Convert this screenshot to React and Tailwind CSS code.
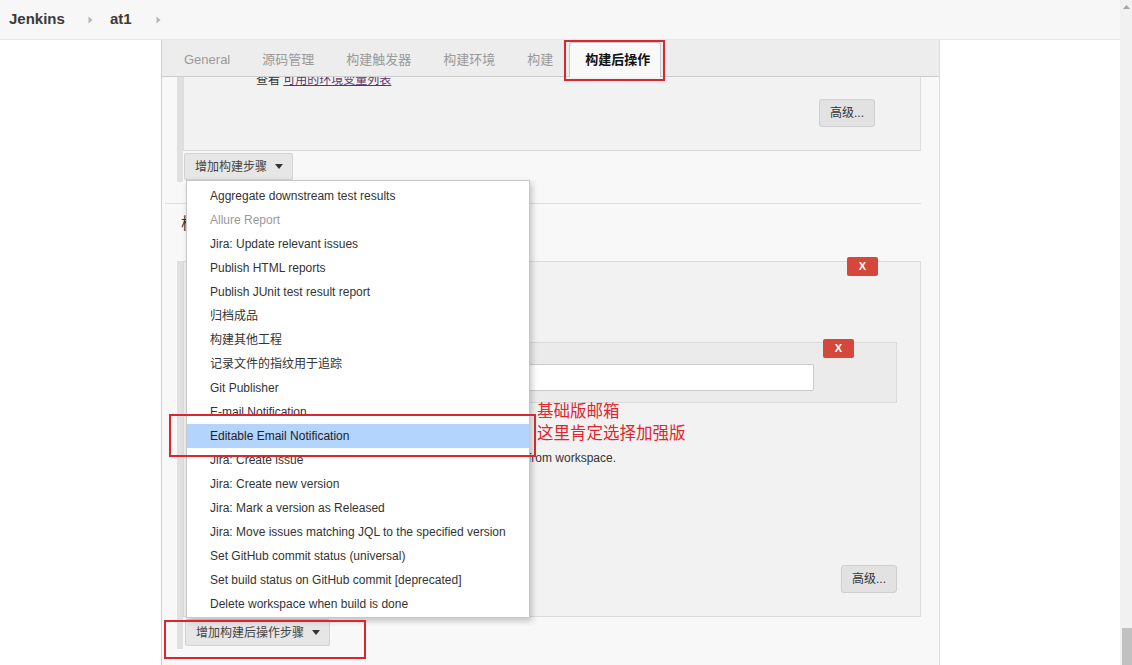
import React from "react";

const menuItems = [
  { t: "Aggregate downstream test results" },
  { t: "Allure Report", dis: true },
  { t: "Jira: Update relevant issues" },
  { t: "Publish HTML reports" },
  { t: "Publish JUnit test result report" },
  { t: "归档成品" },
  { t: "构建其他工程" },
  { t: "记录文件的指纹用于追踪" },
  { t: "Git Publisher" },
  { t: "E-mail Notification" },
  { t: "Editable Email Notification", hi: true },
  { t: "Jira: Create issue" },
  { t: "Jira: Create new version" },
  { t: "Jira: Mark a version as Released" },
  { t: "Jira: Move issues matching JQL to the specified version" },
  { t: "Set GitHub commit status (universal)" },
  { t: "Set build status on GitHub commit [deprecated]" },
  { t: "Delete workspace when build is done" },
];

const tabs = ["General", "源码管理", "构建触发器", "构建环境", "构建"];

function Crumb() {
  return (
    <svg width="5" height="8" viewBox="0 0 5 8" className="block">
      <path d="M0.5 0.5 L4.5 4 L0.5 7.5 Z" fill="#b5b5b5" />
    </svg>
  );
}

function Caret() {
  return (
    <svg width="8" height="5" viewBox="0 0 8 5" className="block">
      <path d="M0 0 L8 0 L4 5 Z" fill="#333" />
    </svg>
  );
}

function AdvBtn() {
  return (
    <div className="h-[28px] px-[10px] flex items-center rounded-[3px] border border-[#cfcfcf] bg-[#e2e2e2] text-[12px] text-[#333]">
      高级...
    </div>
  );
}

function XBtn() {
  return (
    <div className="w-[31px] h-[19px] flex items-center justify-center rounded-[2px] bg-[#d4473a] text-white text-[11px] font-bold leading-none">
      X
    </div>
  );
}

function AddBtn({ label }) {
  return (
    <div className="h-[27px] pl-[10px] pr-[9px] flex items-center gap-[8px] rounded-[2px] border border-[#d2d2d2] bg-[#e6e6e6] text-[12px] text-[#444]">
      <span>{label}</span>
      <Caret />
    </div>
  );
}

export default function App() {
  return (
    <div className="relative w-[1132px] h-[665px] overflow-hidden bg-white flex font-['Liberation_Sans','Noto_Sans_CJK_SC',sans-serif] text-[#333]">
      <div className="w-[1120px] flex flex-col">
        {/* header */}
        <div className="h-[40px] shrink-0 bg-[#f7f7f7] border-b border-[#e6e6e6] flex items-center pl-[9px]">
          <span className="text-[15px] font-bold text-[#3a3a3a]">Jenkins</span>
          <span className="ml-[23px]"><Crumb /></span>
          <span className="ml-[17px] text-[15px] font-bold text-[#3a3a3a]">at1</span>
          <span className="ml-[24px]"><Crumb /></span>
        </div>

        <div className="flex flex-1 min-h-0">
          <div className="w-[161px] shrink-0" />
          {/* panel */}
          <div className="w-[779px] shrink-0 border-l border-r border-l-[#cfcfcf] border-r-[#dcdcdc] bg-[#f8f8f8] flex flex-col">
            {/* tab bar */}
            <div className="h-[37px] shrink-0 bg-[#ededed] border-b border-[#cccccc] flex items-stretch pl-[6px] text-[13px]">
              {tabs.map((t) => (
                <div key={t} className="px-[16px] pt-[3px] flex items-center text-[#9a9a9a]">
                  {t}
                </div>
              ))}
              <div className="self-end h-[35px] -mb-[1px] pl-[15px] pr-[10px] flex items-center border border-b-0 border-[#c8c8c8] rounded-t-[3px] bg-[#f9f9f9] text-[#111] font-semibold">
                构建后操作
              </div>
            </div>

            {/* section 1 */}
            <div className="ml-[15px] border-l-[6px] border-[#e0e0e0] pb-[2px]">
              <div className="mr-[18px] border-x border-b border-[#dcdcdc] bg-[#f2f2f2] overflow-hidden flex flex-col pb-[23px]">
                <div className="-mt-[5px] h-[16px] leading-[16px] pl-[72px] text-[12px]">
                  <span className="text-[#333]">查看 </span>
                  <span className="text-[#5c3566] underline">可用的环境变量列表</span>
                </div>
                <div className="mt-[11px] flex justify-end pr-[45px]">
                  <AdvBtn />
                </div>
              </div>
              <div className="mt-[2px] ml-[1px] flex">
                <AddBtn label="增加构建步骤" />
              </div>
            </div>

            {/* separator */}
            <div className="mt-[21px] ml-[3px] mr-[18px] border-t border-[#dddddd]" />

            {/* section 2 header */}
            <div className="mt-[10px] ml-[19px] text-[16px] leading-[20px] text-[#333]">构建后操作</div>

            {/* section 2 */}
            <div className="mt-[27px] ml-[15px] border-l-[6px] border-[#e0e0e0] pb-[3px]">
              <div className="relative mr-[18px] h-[356px] border border-[#dcdcdc] bg-[#f2f2f2] flex flex-col pb-[23px]">
                <div className="absolute right-[42px] -top-[5px]">
                  <XBtn />
                </div>
                <div className="relative mt-[80px] ml-[150px] mr-[23px] h-[61px] border border-[#dadada] bg-[#ebebeb]">
                  <div className="absolute right-[42px] -top-[4px]">
                    <XBtn />
                  </div>
                  <div className="mt-[21px] ml-[20px] mr-[82px] h-[27px] rounded-[2px] border border-[#cccccc] bg-white" />
                </div>
                <div className="mt-[47px] pl-[344px] h-[16px] leading-[16px] text-[12px] text-[#333]">
                  from workspace.
                </div>
                <div className="mt-auto flex justify-end pr-[23px]">
                  <AdvBtn />
                </div>
              </div>
              <div className="mt-[2px] ml-[2px] flex">
                <AddBtn label="增加构建后操作步骤" />
              </div>
            </div>
          </div>
          <div className="flex-1" />
        </div>
      </div>

      {/* scrollbar */}
      <div className="w-[12px] bg-[#f1f1f1] flex flex-col">
        <div className="h-[14px] flex items-center justify-center">
          <svg width="7" height="4" viewBox="0 0 7 4">
            <path d="M0 4 L3.5 0 L7 4 Z" fill="#a3a3a3" />
          </svg>
        </div>
        <div className="flex-1" />
        <div className="h-[37px] ml-[2px] bg-[#c1c1c1]" />
      </div>

      {/* dropdown menu */}
      <div className="absolute left-[186px] top-[180px] w-[344px] bg-white border border-[#c8c8c8] shadow-[2px_3px_6px_rgba(0,0,0,0.22)] pt-[3px] pb-[1px] z-20">
        {menuItems.map((m) => (
          <div
            key={m.t}
            className={
              "h-[24px] flex items-center pl-[23px] text-[12px] " +
              (m.hi ? "bg-[#b3d4fc] text-[#222]" : m.dis ? "text-[#9a9a9a]" : "text-[#333]")
            }
          >
            {m.t}
          </div>
        ))}
      </div>

      {/* annotations */}
      <div className="absolute left-[564px] top-[40px] w-[101px] h-[41px] border-2 border-[#d9262f] z-30" />
      <div className="absolute left-[169px] top-[414px] w-[367px] h-[43px] border-2 border-[#d9262f] z-30" />
      <div className="absolute left-[164px] top-[620px] w-[202px] h-[39px] border-2 border-[#d9262f] z-30" />
      <div className="absolute left-[537px] top-[400px] z-30 text-[16.5px] leading-[22px] text-[#e0252d]">
        <div>基础版邮箱</div>
        <div>这里肯定选择加强版</div>
      </div>
    </div>
  );
}
